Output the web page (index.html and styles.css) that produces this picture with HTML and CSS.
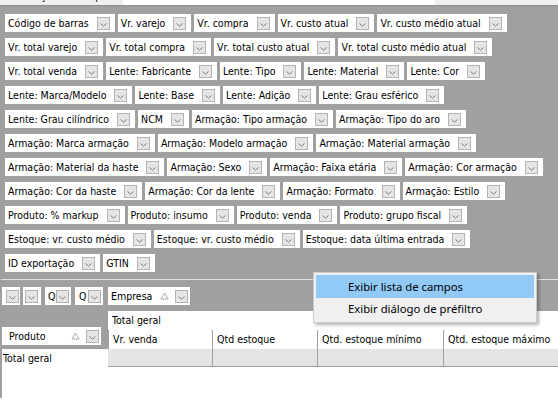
FILE: index.html
```html
<!DOCTYPE html>
<html lang="pt-BR">
<head>
<meta charset="UTF-8" />
<title>Campos da tabela dinâmica</title>
<link rel="stylesheet" href="styles.css">
</head>
<body>

  <!-- faixa das abas (cortada) -->
  <div class="tabs">
    <div class="tab">Informação de campos</div>
    <div class="tab tab-white"></div>
    <div class="tab tab-rest"></div>
  </div>

  <!-- lista de campos disponíveis -->
  <div class="field-list">
    <div class="field-row">
      <div class="field"><span>Código de barras</span><span class="drop"><svg viewBox="0 0 11 11"><path d="M2.5 5.5L5.5 8.2L8.5 5.5"/></svg></span></div>
      <div class="field"><span>Vr. varejo</span><span class="drop"><svg viewBox="0 0 11 11"><path d="M2.5 5.5L5.5 8.2L8.5 5.5"/></svg></span></div>
      <div class="field"><span>Vr. compra</span><span class="drop"><svg viewBox="0 0 11 11"><path d="M2.5 5.5L5.5 8.2L8.5 5.5"/></svg></span></div>
      <div class="field"><span>Vr. custo atual</span><span class="drop"><svg viewBox="0 0 11 11"><path d="M2.5 5.5L5.5 8.2L8.5 5.5"/></svg></span></div>
      <div class="field"><span>Vr. custo médio atual</span><span class="drop"><svg viewBox="0 0 11 11"><path d="M2.5 5.5L5.5 8.2L8.5 5.5"/></svg></span></div>
    </div>
    <div class="field-row">
      <div class="field"><span>Vr. total varejo</span><span class="drop"><svg viewBox="0 0 11 11"><path d="M2.5 5.5L5.5 8.2L8.5 5.5"/></svg></span></div>
      <div class="field"><span>Vr. total compra</span><span class="drop"><svg viewBox="0 0 11 11"><path d="M2.5 5.5L5.5 8.2L8.5 5.5"/></svg></span></div>
      <div class="field"><span>Vr. total custo atual</span><span class="drop"><svg viewBox="0 0 11 11"><path d="M2.5 5.5L5.5 8.2L8.5 5.5"/></svg></span></div>
      <div class="field"><span>Vr. total custo médio atual</span><span class="drop"><svg viewBox="0 0 11 11"><path d="M2.5 5.5L5.5 8.2L8.5 5.5"/></svg></span></div>
    </div>
    <div class="field-row">
      <div class="field"><span>Vr. total venda</span><span class="drop"><svg viewBox="0 0 11 11"><path d="M2.5 5.5L5.5 8.2L8.5 5.5"/></svg></span></div>
      <div class="field"><span>Lente: Fabricante</span><span class="drop"><svg viewBox="0 0 11 11"><path d="M2.5 5.5L5.5 8.2L8.5 5.5"/></svg></span></div>
      <div class="field"><span>Lente: Tipo</span><span class="drop"><svg viewBox="0 0 11 11"><path d="M2.5 5.5L5.5 8.2L8.5 5.5"/></svg></span></div>
      <div class="field"><span>Lente: Material</span><span class="drop"><svg viewBox="0 0 11 11"><path d="M2.5 5.5L5.5 8.2L8.5 5.5"/></svg></span></div>
      <div class="field"><span>Lente: Cor</span><span class="drop"><svg viewBox="0 0 11 11"><path d="M2.5 5.5L5.5 8.2L8.5 5.5"/></svg></span></div>
    </div>
    <div class="field-row">
      <div class="field"><span>Lente: Marca/Modelo</span><span class="drop"><svg viewBox="0 0 11 11"><path d="M2.5 5.5L5.5 8.2L8.5 5.5"/></svg></span></div>
      <div class="field"><span>Lente: Base</span><span class="drop"><svg viewBox="0 0 11 11"><path d="M2.5 5.5L5.5 8.2L8.5 5.5"/></svg></span></div>
      <div class="field"><span>Lente: Adição</span><span class="drop"><svg viewBox="0 0 11 11"><path d="M2.5 5.5L5.5 8.2L8.5 5.5"/></svg></span></div>
      <div class="field"><span>Lente: Grau esférico</span><span class="drop"><svg viewBox="0 0 11 11"><path d="M2.5 5.5L5.5 8.2L8.5 5.5"/></svg></span></div>
    </div>
    <div class="field-row">
      <div class="field"><span>Lente: Grau cilíndrico</span><span class="drop"><svg viewBox="0 0 11 11"><path d="M2.5 5.5L5.5 8.2L8.5 5.5"/></svg></span></div>
      <div class="field"><span>NCM</span><span class="drop"><svg viewBox="0 0 11 11"><path d="M2.5 5.5L5.5 8.2L8.5 5.5"/></svg></span></div>
      <div class="field"><span>Armação: Tipo armação</span><span class="drop"><svg viewBox="0 0 11 11"><path d="M2.5 5.5L5.5 8.2L8.5 5.5"/></svg></span></div>
      <div class="field"><span>Armação: Tipo do aro</span><span class="drop"><svg viewBox="0 0 11 11"><path d="M2.5 5.5L5.5 8.2L8.5 5.5"/></svg></span></div>
    </div>
    <div class="field-row">
      <div class="field"><span>Armação: Marca armação</span><span class="drop"><svg viewBox="0 0 11 11"><path d="M2.5 5.5L5.5 8.2L8.5 5.5"/></svg></span></div>
      <div class="field"><span>Armação: Modelo armação</span><span class="drop"><svg viewBox="0 0 11 11"><path d="M2.5 5.5L5.5 8.2L8.5 5.5"/></svg></span></div>
      <div class="field"><span>Armação: Material armação</span><span class="drop"><svg viewBox="0 0 11 11"><path d="M2.5 5.5L5.5 8.2L8.5 5.5"/></svg></span></div>
    </div>
    <div class="field-row">
      <div class="field"><span>Armação: Material da haste</span><span class="drop"><svg viewBox="0 0 11 11"><path d="M2.5 5.5L5.5 8.2L8.5 5.5"/></svg></span></div>
      <div class="field"><span>Armação: Sexo</span><span class="drop"><svg viewBox="0 0 11 11"><path d="M2.5 5.5L5.5 8.2L8.5 5.5"/></svg></span></div>
      <div class="field"><span>Armação: Faixa etária</span><span class="drop"><svg viewBox="0 0 11 11"><path d="M2.5 5.5L5.5 8.2L8.5 5.5"/></svg></span></div>
      <div class="field"><span>Armação: Cor armação</span><span class="drop"><svg viewBox="0 0 11 11"><path d="M2.5 5.5L5.5 8.2L8.5 5.5"/></svg></span></div>
    </div>
    <div class="field-row">
      <div class="field"><span>Armação: Cor da haste</span><span class="drop"><svg viewBox="0 0 11 11"><path d="M2.5 5.5L5.5 8.2L8.5 5.5"/></svg></span></div>
      <div class="field"><span>Armação: Cor da lente</span><span class="drop"><svg viewBox="0 0 11 11"><path d="M2.5 5.5L5.5 8.2L8.5 5.5"/></svg></span></div>
      <div class="field"><span>Armação: Formato</span><span class="drop"><svg viewBox="0 0 11 11"><path d="M2.5 5.5L5.5 8.2L8.5 5.5"/></svg></span></div>
      <div class="field"><span>Armação: Estilo</span><span class="drop"><svg viewBox="0 0 11 11"><path d="M2.5 5.5L5.5 8.2L8.5 5.5"/></svg></span></div>
    </div>
    <div class="field-row">
      <div class="field"><span>Produto: % markup</span><span class="drop"><svg viewBox="0 0 11 11"><path d="M2.5 5.5L5.5 8.2L8.5 5.5"/></svg></span></div>
      <div class="field"><span>Produto: insumo</span><span class="drop"><svg viewBox="0 0 11 11"><path d="M2.5 5.5L5.5 8.2L8.5 5.5"/></svg></span></div>
      <div class="field"><span>Produto: venda</span><span class="drop"><svg viewBox="0 0 11 11"><path d="M2.5 5.5L5.5 8.2L8.5 5.5"/></svg></span></div>
      <div class="field"><span>Produto: grupo fiscal</span><span class="drop"><svg viewBox="0 0 11 11"><path d="M2.5 5.5L5.5 8.2L8.5 5.5"/></svg></span></div>
    </div>
    <div class="field-row">
      <div class="field"><span>Estoque: vr. custo médio</span><span class="drop"><svg viewBox="0 0 11 11"><path d="M2.5 5.5L5.5 8.2L8.5 5.5"/></svg></span></div>
      <div class="field"><span>Estoque: vr. custo médio</span><span class="drop"><svg viewBox="0 0 11 11"><path d="M2.5 5.5L5.5 8.2L8.5 5.5"/></svg></span></div>
      <div class="field"><span>Estoque: data última entrada</span><span class="drop"><svg viewBox="0 0 11 11"><path d="M2.5 5.5L5.5 8.2L8.5 5.5"/></svg></span></div>
    </div>
    <div class="field-row">
      <div class="field"><span>ID exportação</span><span class="drop"><svg viewBox="0 0 11 11"><path d="M2.5 5.5L5.5 8.2L8.5 5.5"/></svg></span></div>
      <div class="field"><span>GTIN</span><span class="drop"><svg viewBox="0 0 11 11"><path d="M2.5 5.5L5.5 8.2L8.5 5.5"/></svg></span></div>
    </div>
  </div>

  <!-- grade dinâmica -->
  <div class="pivot">
    <div class="column-area">
      <div class="field mini m1"><span class="drop"><svg viewBox="0 0 11 11"><path d="M2.5 5.5L5.5 8.2L8.5 5.5"/></svg></span></div>
      <div class="field mini m2"><span class="drop"><svg viewBox="0 0 11 11"><path d="M2.5 5.5L5.5 8.2L8.5 5.5"/></svg></span></div>
      <div class="field mini m3"><span>Q</span><span class="drop"><svg viewBox="0 0 11 11"><path d="M2.5 5.5L5.5 8.2L8.5 5.5"/></svg></span></div>
      <div class="field mini m4"><span>Q</span><span class="drop"><svg viewBox="0 0 11 11"><path d="M2.5 5.5L5.5 8.2L8.5 5.5"/></svg></span></div>
      <div class="field sorted empresa"><span>Empresa</span><svg class="sort" viewBox="0 0 9 8"><path d="M4.5 1L8 7H1Z"/></svg><span class="drop"><svg viewBox="0 0 11 11"><path d="M2.5 5.5L5.5 8.2L8.5 5.5"/></svg></span></div>
    </div>

    <div class="row-area">
      <div class="field sorted produto"><span>Produto</span><svg class="sort" viewBox="0 0 9 8"><path d="M4.5 1L8 7H1Z"/></svg><span class="drop"><svg viewBox="0 0 11 11"><path d="M2.5 5.5L5.5 8.2L8.5 5.5"/></svg></span></div>
    </div>
    <div class="grand-head">Total geral</div>
    <div class="col-head">Vr. venda</div>
    <div class="col-head">Qtd estoque</div>
    <div class="col-head">Qtd. estoque mínimo</div>
    <div class="col-head">Qtd. estoque máximo</div>

    <div class="row-head">Total geral</div>
    <div class="cell"></div>
    <div class="cell"></div>
    <div class="cell"></div>
    <div class="cell"></div>
  </div>

  <!-- menu de contexto -->
  <div class="menu">
    <div class="menu-item hover">Exibir lista de campos</div>
    <div class="menu-item">Exibir diálogo de préfiltro</div>
  </div>

</body>
</html>
```

FILE: styles.css
```css
 body {
   margin: 0;
   height: 399px;
   overflow: hidden;
   position: relative;
   background: #fff;
   color: #000;
   font-family: "DejaVu Sans Condensed", "DejaVu Sans", sans-serif;
   font-stretch: condensed;
   font-size: 10.5px;
 }
 /* abas */
 .tabs {
   display: flex;
   height: 5px;
   overflow: hidden;
   border-bottom: 1px solid #8c8c8c;
 }
 .tab {
   width: 123px;
   background: #f0f0f0;
   padding-left: 4px;
   box-sizing: border-box;
   line-height: 13px;
   margin-top: -10px;
   height: 15px;
 }
 .tab-white {
   width: 312px;
   background: #fff;
 }
 .tab-rest {
   flex: 1;
 }
 /* lista de campos */
 .field-list {
   background: #a0a0a0;
   padding: 8px 0 7px 5px;
   display: flex;
   flex-direction: column;
   gap: 6px;
 }
 .field-row {
   display: flex;
   gap: 3px;
 }
 .field {
   display: flex;
   align-items: center;
   height: 18px;
   background: #fff;
   padding: 0 5px 0 3px;
   white-space: nowrap;
   box-sizing: border-box;
 }
 .drop {
   width: 13px;
   height: 13px;
   margin-left: 8px;
   box-sizing: border-box;
   border: 1px solid #b3b3b3;
   background: #e5e5e5;
   display: flex;
   flex: none;
 }
 .drop svg {
   width: 11px;
   height: 11px;
   fill: none;
   stroke: #74808e;
   stroke-width: 1;
 }
 .sort {
   width: 9px;
   height: 8px;
   margin-left: auto;
   fill: none;
   stroke: #a8a8a8;
   flex: none;
 }
 .sorted .drop {
   margin-left: 6px;
 }
 /* grade */
 .pivot {
   display: grid;
   grid-template-columns: 106px 104px 105px 126px 1fr;
   grid-template-rows: 31px 19px 19px 18px;
   border-top: 1px solid #e2e2e2;
   border-left: 2px solid #a0a0a0;
   height: 118px;
   align-content: start;
 }
 .column-area {
   grid-column: 1 / -1;
   background: #a0a0a0;
   display: flex;
   padding-top: 7px;
 }
 .mini {
   padding: 0 2px 0 3px;
   justify-content: space-between;
 }
 .mini .drop {
   margin-left: 0;
 }
 .m1 { width: 18px; padding-left: 4px; }
 .m2 { width: 18px; margin-left: 3px; padding-left: 2px; }
 .m3 { width: 26px; margin-left: 4px; }
 .m4 { width: 28px; margin-left: 4px; padding-left: 4px; }
 .empresa {
   width: 82px;
   margin-left: 5px;
   padding-right: 2px;
 }
 .row-area {
   grid-row: 2 / 4;
   background: #a0a0a0;
   display: flex;
   align-items: flex-end;
   padding-bottom: 4px;
 }
 .produto {
   width: 99px;
   padding-left: 7px;
   padding-right: 2px;
 }
 .grand-head {
   grid-column: 2 / -1;
   padding: 3px 4px 0;
 }
 .col-head {
   padding: 3px 4px 0;
   border-left: 1px solid #a0a0a0;
   white-space: nowrap;
 }
 .col-head:nth-of-type(1) {
   border-left: none;
 }
 .row-head {
   padding: 3px 1px 0;
 }
 .cell {
   background: #e4e4e4;
   border-left: 1px solid #a0a0a0;
   border-bottom: 1px solid #a0a0a0;
 }
 .row-head + .cell {
   border-left: none;
 }
 /* menu de contexto */
 .menu {
   position: absolute;
   left: 313px;
   top: 272px;
   width: 224px;
   box-sizing: border-box;
   padding: 2px;
   background: #f0f0f0;
   border: 1px solid #cccccc;
   box-shadow: 2px 2px 3px rgba(0, 0, 0, 0.3);
   font-family: "Noto Sans", sans-serif;
   font-stretch: normal;
   font-size: 11.3px;
 }
 .menu-item {
   height: 22px;
   line-height: 22px;
   padding-left: 32px;
 }
 .menu-item.hover {
   height: 23px;
   line-height: 23px;
   background: #91c9f7;
 }
```
